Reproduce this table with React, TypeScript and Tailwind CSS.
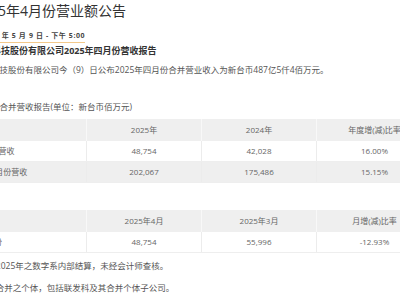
import React from 'react';

const font = { fontFamily: '"Open Sans", "Noto Sans CJK SC", sans-serif' };

interface TableProps {
    head: string[];
    rows: string[][];
}

const RevenueTable: React.FC<TableProps> = ({ head, rows }) => {
    return (
        <div className="w-[460px] text-[8px] text-[#666]">
            <div className="grid grid-cols-4 h-[22px] bg-[#efefef] items-center">
                {head.map((h, i) => (
                    <div
                        key={i}
                        className={`h-full flex items-center justify-center ${i < 3 ? 'border-r border-[#f8f8f8]' : ''}`}
                    >
                        {h}
                    </div>
                ))}
            </div>
            {rows.map((row, r) => (
                <div
                    key={r}
                    className={`grid grid-cols-4 h-[21px] border-b border-[#eeeeee] ${r % 2 === 1 ? 'bg-[#efefef]' : 'bg-white'}`}
                >
                    {row.map((cell, i) => (
                        <div
                            key={i}
                            className={`h-full flex items-center ${i === 0 ? 'pl-[6px] justify-start' : 'justify-center'} ${i < 3 ? 'border-r border-[#ececec]' : ''}`}
                        >
                            {cell}
                        </div>
                    ))}
                </div>
            ))}
        </div>
    );
};

const App: React.FC = () => {
    return (
        <div className="w-[400px] h-[300px] overflow-hidden bg-white" style={font}>
            <div className="-ml-[28px] w-[460px] flex flex-col">
                <h1 className="text-[14px] leading-[22px] text-[#333] font-normal pl-[2px]">
                    2025年4月份营业额公告
                </h1>
                <div className="mt-[9px] flex leading-[10px]">
                    <span className="ml-[9px] text-[7px] font-bold leading-[10px] pb-[1px] border-b border-[#f3c98b] text-[#444] tracking-[0.6px]">
                        2025 年 5 月 9 日 - 下午 5:00
                    </span>
                </div>
                <p className="mt-[2px] text-[9px] leading-[12px] font-bold text-[#333] pl-[2px]">
                    联发科技股份有限公司2025年四月份营收报告
                </p>
                <p className="mt-[7px] text-[8.5px] leading-[12px] text-[#555] pl-[2px]">
                    联发科技股份有限公司今（9）日公布2025年四月份合并营业收入为新台币487亿5仟4佰万元。
                </p>
                <p className="mt-[25px] text-[8.5px] leading-[12px] text-[#555] pl-[2px]">
                    联发科合并营收报告(单位：新台币佰万元)
                </p>
                <div className="mt-[6px]">
                    <RevenueTable
                        head={['', '2025年', '2024年', '年度增(减)比率']}
                        rows={[
                            ['4月份营收', '48,754', '42,028', '16.00%'],
                            ['1至4月份营收', '202,067', '175,486', '15.15%'],
                        ]}
                    />
                </div>
                <div className="mt-[27px]">
                    <RevenueTable
                        head={['', '2025年4月', '2025年3月', '月增(减)比率']}
                        rows={[['四月份', '48,754', '55,996', '-12.93%']]}
                    />
                </div>
                <p className="mt-[7px] text-[8.5px] leading-[12px] text-[#555] pl-[2px]">
                    注1：2025年之数字系内部结算，未经会计师查核。
                </p>
                <p className="mt-[10px] text-[8.5px] leading-[12px] text-[#555] pl-[2px]">
                    注2：合并之个体，包括联发科及其合并个体子公司。
                </p>
            </div>
        </div>
    );
};

export default App;
